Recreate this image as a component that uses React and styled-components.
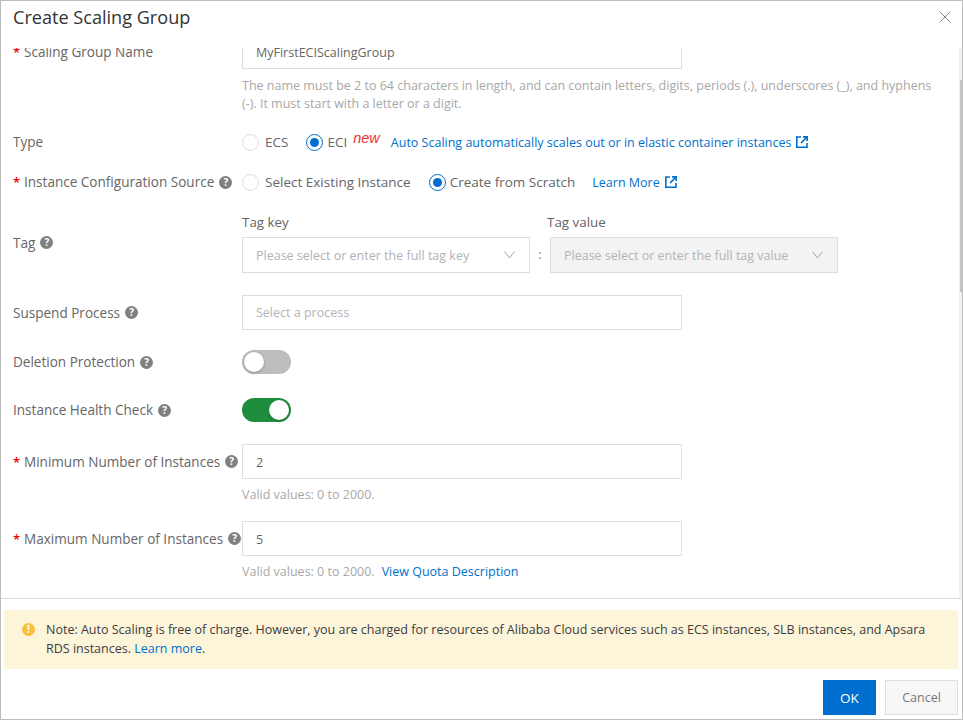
import React from 'react';
import styled, { createGlobalStyle } from 'styled-components';

const Global = createGlobalStyle`
  html, body { margin: 0; padding: 0; background: #fff; }
  body { font-family: "Open Sans", "Noto Sans", sans-serif; font-size: 12.5px; color: #555; }
  * { box-sizing: border-box; }
`;

const Dialog = styled.div`
  width: 963px; height: 720px; display: flex; flex-direction: column;
  border: 1px solid #bdbdbd; background: #fff; overflow: hidden;
`;
const Header = styled.header`
  height: 47px; flex: none; display: flex; align-items: center; justify-content: space-between;
  padding: 0 11px 15px 12px;
`;
const Title = styled.h1`
  margin: 0; font-size: 18.1px; font-weight: 400; color: #333; line-height: 24px;
`;
const Close = styled.button`
  border: 0; background: none; padding: 0; width: 12px; height: 12px; display: flex; color: #8a8a8a;
`;
const Body = styled.div`
  height: 551px; flex: none; overflow: hidden; position: relative; border-bottom: 1px solid #dedede;
`;
const Track = styled.div`
  position: absolute; top: 0; bottom: 0; right: 0; width: 3px; background: #f1f1f1;
`;
const Thumb = styled.div`
  position: absolute; top: 32px; right: 0; width: 2px; height: 212px; background: #c4c4c4;
`;
const Form = styled.div`
  margin-top: -14px; padding-left: 12px;
`;
const Row = styled.div`
  display: grid; grid-template-columns: 229px 1fr; margin-bottom: ${p => p.$mb || 0}px;
`;
const Label = styled.div`
  display: flex; align-items: center; height: ${p => p.$h || 35}px; color: #666; white-space: nowrap;
  font-size: 13.55px;
`;
const Star = styled.span`
  color: #e00; width: 11px; flex: none; font-size: 13px; font-weight: 600;
`;
const Help = styled.span`
  width: 13px; height: 13px; border-radius: 50%; background: #808080; color: #fff; margin-left: 5px; flex: none;
  font-size: 10px; font-weight: 700; line-height: 13px; text-align: center;
`;
const Input = styled.div`
  width: ${p => p.$w || 440}px; height: ${p => p.$h || 35}px; border: 1px solid #dedede;
  background: ${p => (p.$disabled ? '#f3f3f3' : '#fff')};
  display: flex; align-items: center; justify-content: space-between;
  padding: 0 14px 0 13px; white-space: nowrap; flex: none;
`;
const Value = styled.span`
  color: #666; padding-top: 2px;
`;
const Hint = styled.div`
  color: #a8a8a8; line-height: 18px; margin-top: ${p => p.$mt || 0}px; width: 700px; white-space: nowrap;
`;
const Inline = styled.div`
  display: flex; align-items: center; height: 20px; white-space: nowrap; color: #666; font-size: 13.5px;
`;
const Radio = styled.span`
  width: 17px; height: 17px; border-radius: 50%; flex: none;
  border: 1px solid ${p => (p.$on ? '#006ecf' : '#dedede')};
  margin-right: ${p => (p.$on ? 4 : 6)}px; background: #fff;
  display: flex; align-items: center; justify-content: center;
  &::after { content: ''; width: 9px; height: 9px; border-radius: 50%; background: ${p => (p.$on ? '#006ecf' : 'transparent')}; }
`;
const Choice = styled.span`
  margin-right: ${p => p.$mr || 0}px;
`;
const NewTag = styled.i`
  color: #f03030; font-family: "Liberation Sans", sans-serif; font-size: 14.5px; margin: -9px 11px 0 6px;
`;
const Link = styled.a`
  color: #0070cc; display: inline-flex; align-items: center; white-space: nowrap; font-size: 12.5px;
  margin-left: ${p => p.$ml || 0}px;
  svg { margin-left: 5px; }
`;
const NoticeLink = styled.a`
  color: #0070cc;
`;
const TagWrap = styled.div`
  display: flex; align-items: flex-end;
`;
const TagCol = styled.div`
  display: flex; flex-direction: column;
`;
const TagTitle = styled.div`
  height: 25px; line-height: 20px; color: #666; font-size: 13.4px;
  margin-left: ${p => p.$ml || 0}px;
`;
const Colon = styled.span`
  width: 20px; height: 36px; line-height: 36px; text-align: center; color: #777;
`;
const Placeholder = styled.span`
  color: #b3b3b3;
`;
const Switch = styled.span`
  width: 49px; height: 24px; border-radius: 12px; display: flex; align-items: center; padding: 2px;
  justify-content: ${p => (p.$on ? 'flex-end' : 'flex-start')};
  background: ${p => (p.$on ? '#1e8e3e' : '#bdbdbd')};
  &::after { content: ''; width: 20px; height: 20px; border-radius: 50%; background: #fff; box-shadow: 0 1px 3px rgba(0,0,0,.25); }
`;
const Notice = styled.div`
  margin: 11px 4px 0 3px; height: 59px; background: #fdf5da; display: flex; padding: 10px 0 0 18px;
  color: #3c3c3c; line-height: 19px; flex: none;
`;
const NoticeIcon = styled.span`
  width: 13px; height: 13px; border-radius: 50%; background: #fbbf3f; color: #fff; font-size: 10px; font-weight: 700;
  line-height: 13px; text-align: center; flex: none; margin: 3px 11px 0 0;
`;
const NoticeText = styled.div`
  width: 890px;
`;
const Footer = styled.footer`
  display: flex; justify-content: flex-end; gap: 9px; padding: 11px 4px 0 0;
`;
const Btn = styled.button`
  height: 35px; font: inherit; padding: 0;
  font-size: ${p => (p.$primary ? 13.5 : 12.5)}px;
  width: ${p => (p.$primary ? 53 : 73)}px;
  background: ${p => (p.$primary ? '#006ecf' : '#f7f7f7')};
  color: ${p => (p.$primary ? '#fff' : '#777')};
  border: 1px solid ${p => (p.$primary ? '#006ecf' : '#dedede')};
`;

const External = () => (
  <svg width="12" height="12" viewBox="0 0 12 12" fill="none" stroke="#0070cc" strokeWidth="1.6">
    <path d="M5 1H.8v10.2H11V7" />
    <path d="M5 7l5.5-5.5M7 .9h4.2v4.2" />
  </svg>
);
const Chevron = () => (
  <svg width="11" height="8" viewBox="0 0 11 8" fill="none" stroke="#a6a6a6" strokeWidth="1">
    <path d="M.5.5L5.5 7l5-6.5" />
  </svg>
);

export default function App() {
  return (
    <>
      <Global />
      <Dialog>
        <Header>
          <Title>Create Scaling Group</Title>
          <Close aria-label="close">
            <svg width="12" height="12" viewBox="0 0 12 12" stroke="currentColor" strokeWidth="1"><path d="M.5.5l11 11M11.5.5l-11 11" /></svg>
          </Close>
        </Header>
        <Body>
          <Form>
            <Row $mb={19}>
              <Label><Star>*</Star>Scaling Group Name</Label>
              <div>
                <Input><Value>MyFirstECIScalingGroup</Value></Input>
                <Hint $mt={8}>The name must be 2 to 64 characters in length, and can contain letters, digits, periods (.), underscores (_), and hyphens<br />(-). It must start with a letter or a digit.</Hint>
              </div>
            </Row>
            <Row $mb={20}>
              <Label $h={20}>Type</Label>
              <Inline>
                <Radio /><Choice $mr={18}>ECS</Choice>
                <Radio $on /><Choice>ECI</Choice><NewTag>new</NewTag>
                <Link>Auto Scaling automatically scales out or in elastic container instances<External /></Link>
              </Inline>
            </Row>
            <Row $mb={20}>
              <Label $h={20}><Star>*</Star>Instance Configuration Source<Help>?</Help></Label>
              <Inline>
                <Radio /><Choice $mr={18}>Select Existing Instance</Choice>
                <Radio $on /><Choice>Create from Scratch</Choice>
                <Link $ml={17}>Learn More<External /></Link>
              </Inline>
            </Row>
            <Row $mb={22}>
              <Label $h={61}>Tag<Help>?</Help></Label>
              <TagWrap>
                <TagCol>
                  <TagTitle>Tag key</TagTitle>
                  <Input $w={288} $h={36}><Placeholder>Please select or enter the full tag key</Placeholder><Chevron /></Input>
                </TagCol>
                <Colon>:</Colon>
                <TagCol>
                  <TagTitle $ml={-3}>Tag value</TagTitle>
                  <Input $w={288} $h={36} $disabled><Placeholder>Please select or enter the full tag value</Placeholder><Chevron /></Input>
                </TagCol>
              </TagWrap>
            </Row>
            <Row $mb={20}>
              <Label>Suspend Process<Help>?</Help></Label>
              <Input><Placeholder>Select a process</Placeholder></Input>
            </Row>
            <Row $mb={24}>
              <Label $h={24}>Deletion Protection<Help>?</Help></Label>
              <Switch />
            </Row>
            <Row $mb={22}>
              <Label $h={24}>Instance Health Check<Help>?</Help></Label>
              <Switch $on />
            </Row>
            <Row $mb={17}>
              <Label><Star>*</Star>Minimum Number of Instances<Help>?</Help></Label>
              <div>
                <Input><Value>2</Value></Input>
                <Hint $mt={7}>Valid values: 0 to 2000.</Hint>
              </div>
            </Row>
            <Row>
              <Label><Star>*</Star>Maximum Number of Instances<Help>?</Help></Label>
              <div>
                <Input><Value>5</Value></Input>
                <Hint $mt={7}>Valid values: 0 to 2000.<Link $ml={7}>View Quota Description</Link></Hint>
              </div>
            </Row>
          </Form>
          <Track><Thumb /></Track>
        </Body>
        <Notice>
          <NoticeIcon>!</NoticeIcon>
          <NoticeText>Note: Auto Scaling is free of charge. However, you are charged for resources of Alibaba Cloud services such as ECS instances, SLB instances, and Apsara RDS instances. <NoticeLink>Learn more</NoticeLink>.</NoticeText>
        </Notice>
        <Footer>
          <Btn $primary>OK</Btn>
          <Btn>Cancel</Btn>
        </Footer>
      </Dialog>
    </>
  );
}
